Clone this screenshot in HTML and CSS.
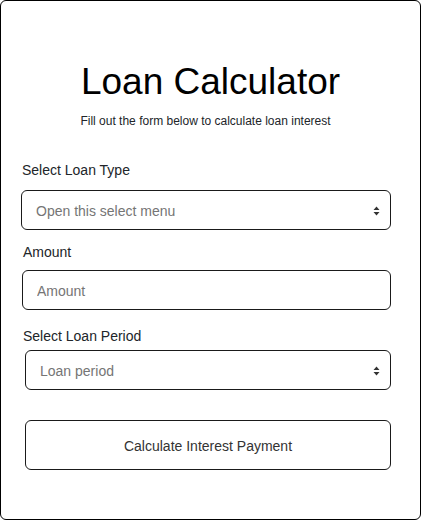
FILE: index.html
```html
<!DOCTYPE html>
<html lang="en">
<head>
<meta charset="utf-8">
<title>Loan Calculator</title>
<link rel="stylesheet" href="styles.css">
</head>
<body>
<div class="card">
  <h1 class="title">Loan Calculator</h1>
  <p class="subtitle">Fill out the form below to calculate loan interest</p>
  <form class="form">
    <label class="label label-type" for="type">Select Loan Type</label>
    <div class="select-wrap wrap-type">
      <select id="type" class="field">
        <option>Open this select menu</option>
      </select>
      <svg class="arrows" width="7" height="10" viewBox="0 0 7 10"><path d="M3.5 0.5 L6.5 4 H0.5 Z M3.5 9.5 L6.5 6 H0.5 Z" fill="#333"/></svg>
    </div>
    <label class="label label-amount" for="amount">Amount</label>
    <input id="amount" class="field field-amount" type="text" placeholder="Amount">
    <label class="label label-period" for="period">Select Loan Period</label>
    <div class="select-wrap wrap-period">
      <select id="period" class="field">
        <option>Loan period</option>
      </select>
      <svg class="arrows" width="7" height="10" viewBox="0 0 7 10"><path d="M3.5 0.5 L6.5 4 H0.5 Z M3.5 9.5 L6.5 6 H0.5 Z" fill="#333"/></svg>
    </div>
    <button type="button" class="btn">Calculate Interest Payment</button>
  </form>
</div>
</body>
</html>
```
FILE: styles.css
```css
* { box-sizing: border-box; }
html, body { margin: 0; padding: 0; background: #fff; }
body { font-family: "Liberation Sans", Arial, sans-serif; color: #212529; }

.card {
  width: 421px;
  height: 520px;
  border: 1px solid #000;
  border-radius: 6px;
  padding-top: 60px;
}

.title {
  margin: 0;
  font-size: 37px;
  font-weight: 400;
  line-height: 42px;
  text-align: center;
  color: #000;
}

.subtitle {
  margin: 11px 0 0;
  font-size: 12px;
  line-height: 14px;
  text-align: center;
  padding-right: 10px;
  color: #212529;
}

.form {
  display: flex;
  flex-direction: column;
  align-items: stretch;
  padding: 0 29px 0 20px;
}

.label {
  display: block;
  font-size: 14px;
  line-height: 16px;
  color: #212529;
}
.label-type { margin: 34px 0 12px 1px; }
.label-amount { margin: 14px 0 10px 2px; }
.label-period { margin: 18px 0 6px 2px; }

.select-wrap { position: relative; }
.wrap-period { margin-left: 4px; }

.field {
  display: block;
  width: 100%;
  height: 40px;
  border: 1px solid #1a1a1a;
  border-radius: 6px;
  background: #fff;
  padding: 2px 30px 0 14px;
  font-family: "Liberation Sans", Arial, sans-serif;
  font-size: 14px;
  color: #757575;
  -webkit-appearance: none;
  appearance: none;
  outline: none;
}
.field-amount { margin-left: 1px; width: calc(100% - 1px); }
.field-amount::placeholder { color: #757575; opacity: 1; }

.arrows {
  position: absolute;
  right: 11px;
  top: 16px;
  pointer-events: none;
}

.btn {
  margin: 30px 0 0 4px;
  height: 50px;
  padding-top: 2px;
  border: 1px solid #1a1a1a;
  border-radius: 6px;
  background: #fff;
  font-family: "Liberation Sans", Arial, sans-serif;
  font-size: 14px;
  color: #333;
  cursor: pointer;
}
```
